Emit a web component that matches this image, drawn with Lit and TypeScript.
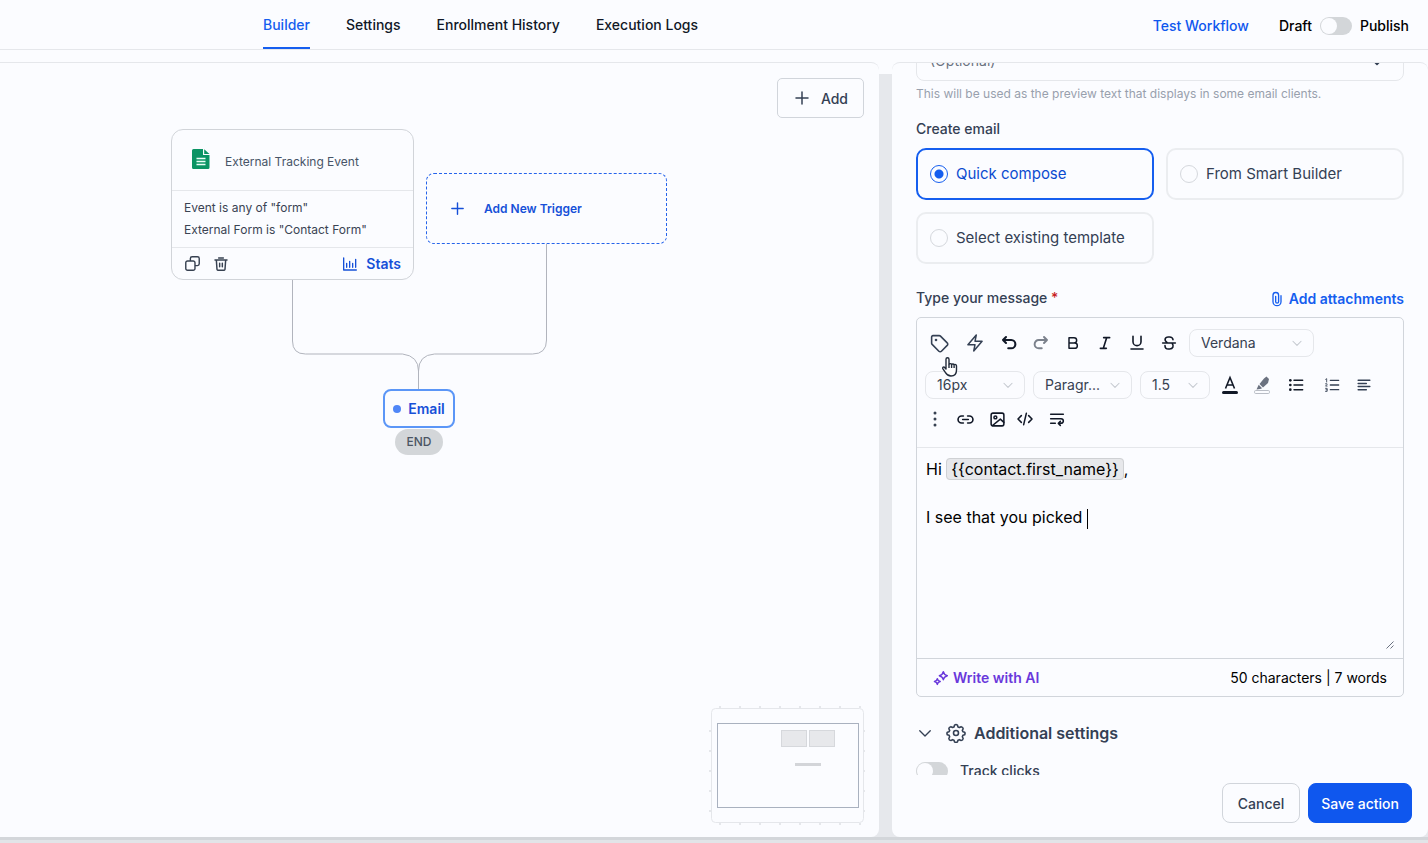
import { LitElement, html, css, svg, nothing } from "lit";
import { customElement } from "lit/decorators.js";

const icon = (name: string, body: unknown, size = 20, box = 24, width = 2) => html`
  <svg class="icon ${name}" width=${size} height=${size} viewBox="0 0 ${box} ${box}" fill="none"
    stroke="currentColor" stroke-width=${width} stroke-linecap="round" stroke-linejoin="round" aria-hidden="true">${body}</svg>`;

const chevron = (name: string, size: number, width = 2) =>
  icon(name, svg`<path d="m5 9 7 7 7-7"/>`, size, 24, width);

const icons = {
  plus: (s = 20) => icon("plus", svg`<path d="M12 4v16M4 12h16"/>`, s),
  sheet: () => html`<svg class="icon sheet" width="20" height="22" viewBox="0 0 20 22" aria-hidden="true">
    <path fill="#0b9464" d="M2.500 1H12v6h6.500v12.500a1.500 1.500 0 0 1-1.500 1.500H2.500A1.500 1.500 0 0 1 1 19.500v-17A1.500 1.500 0 0 1 2.500 1z"/>
    <path fill="#0b9464" d="M13.200 1.200 18.500 6h-5.300z"/>
    <path stroke="#e9fff6" stroke-width="1.400" d="M5.500 10.500h9M5.500 13.500h9M5.500 16.500h9"/></svg>`,
  copy: () => icon("copy", svg`<rect x="9" y="2.500" width="12.500" height="12.500" rx="2.500"/><path fill="#fbfcff" d="M5 8.500h8A2.500 2.500 0 0 1 15.500 11v8a2.500 2.500 0 0 1-2.500 2.500H5A2.500 2.500 0 0 1 2.500 19v-8A2.500 2.500 0 0 1 5 8.500z"/>`, 17),
  trash: () => icon("trash", svg`<path d="M3 6h18M8.500 3h7M5 6l1 14a2 2 0 0 0 2 1.500h8a2 2 0 0 0 2-1.500l1-14M10 11v5M14 11v5"/>`, 16, 24, 2.2),
  stats: () => icon("stats", svg`<path d="M2.500 3v18h19M7 17v-6M11.500 17V8M16 17v-6M20.500 17V5"/>`, 16),
  clip: () => icon("clip", svg`<path d="M18 7v9a6 6 0 0 1-12 0V6.500a4.200 4.200 0 0 1 8.400 0V16a2.200 2.200 0 0 1-4.400 0V8"/>`, 16),
  tag: () => icon("tag", svg`<path d="M3 4.500A1.500 1.500 0 0 1 4.500 3h7.200a2 2 0 0 1 1.400.600l7.700 7.700a2 2 0 0 1 0 2.900l-6.600 6.600a2 2 0 0 1-2.900 0L3.600 13a2 2 0 0 1-.6-1.400z"/><circle cx="8" cy="8" r=".6"/>`, 21, 24, 1.8),
  bolt: () => icon("bolt", svg`<path d="M13.500 2.500 3.500 14H12l-1.500 7.500L20.500 10H12z"/>`, 20, 24, 1.8),
  undo: () => icon("undo", svg`<path d="M4 8h11a5.500 5.500 0 0 1 0 11h-4M8 4 4 8l4 4"/>`, 18, 24, 2.8),
  redo: () => icon("redo", svg`<path d="M20 8H9a5.500 5.500 0 0 0 0 11h4M16 4l4 4-4 4"/>`, 18, 24, 2.6),
  bold: () => icon("bold", svg`<path d="M6 4h7.500a4 4 0 0 1 0 8H6zM6 12h8.500a4 4 0 0 1 0 8H6z"/>`, 16, 24, 2.2),
  italic: () => icon("italic", svg`<path d="M10 4h9M5 20h9M14.500 4l-5 16"/>`, 16, 24, 2.4),
  underline: () => icon("underline", svg`<path d="M6 2v8a6 6 0 0 0 12 0V2M3 21h18"/>`, 16, 24, 2.4),
  strike: () => icon("strike", svg`<path d="M18 7a5 4 0 0 0-5-4h-2C5.500 3 4.500 8.500 9 11M6 16c0 3 2 5 5 5h2c5 0 6.500-5 4-8M2.500 12h19"/>`, 16, 24, 2.4),
  textColor: () => html`<svg class="icon" width="18" height="20" viewBox="0 0 18 20" fill="none" stroke="#111827" stroke-width="1.600" aria-hidden="true">
    <path d="M4.500 13.500 9 2.500l4.500 11M6 10h6"/><path stroke-width="3" stroke-linecap="round" d="M2.500 17.500h13"/></svg>`,
  marker: () => html`<svg class="icon" width="18" height="20" viewBox="0 0 18 20" fill="none" aria-hidden="true">
    <path fill="#6b7280" d="M13.500 1.500 16 4l-1 4-5 4.500-3.500-3.500L11 3.500zM5.700 9.800l3.400 3.400-2 .800-3.600.500z"/>
    <rect x="1.500" y="15.500" width="15" height="3" rx="1.200" stroke="#b9bdc5"/></svg>`,
  bullets: () => icon("bullets", svg`<path d="M9 5h13M9 12h13M9 19h13"/><g fill="currentColor" stroke="none"><circle cx="3.500" cy="5" r="2"/><circle cx="3.500" cy="12" r="2"/><circle cx="3.500" cy="19" r="2"/></g>`, 16, 24, 2.2),
  numbers: () => icon("numbers", svg`<path d="M9.500 5H22M9.500 12H22M9.500 19H22"/><path stroke-width="1.300" d="M2.500 3.500 4 2.500v5M2.300 10.200h2.200v1.200l-2.200 2.200h2.400M2.300 17h2.400v4.600H2.300M3 19.200h1.700"/>`, 16, 24, 2),
  align: () => icon("align", svg`<path d="M2 4h20M2 9.300h14M2 14.600h20M2 20h14"/>`, 14, 24, 2.5),
  more: () => html`<svg class="icon" width="6" height="18" viewBox="0 0 6 18" fill="#374151" aria-hidden="true">
    <circle cx="3" cy="3" r="1.500"/><circle cx="3" cy="9" r="1.500"/><circle cx="3" cy="15" r="1.500"/></svg>`,
  link: () => icon("link", svg`<path d="M9 7H6.500a5 5 0 0 0 0 10H9M15 7h2.500a5 5 0 0 1 0 10H15M8 12h8"/>`, 17, 24, 2.3),
  image: () => icon("image", svg`<rect x="3" y="3" width="18" height="18" rx="2.500"/><circle cx="9" cy="9" r="2"/><path d="m5 20.500 11-9 5 4.500"/>`, 17, 24, 2.2),
  code: () => icon("code", svg`<path d="m6.500 7-5 5 5 5M17.500 7l5 5-5 5M14 3.500l-4 17"/>`, 16, 24, 2.3),
  wrap: () => icon("wrap", svg`<path d="M2.500 5h19M2.500 11.500H18a3.500 3.500 0 0 1 0 7h-3.500M2.500 18.500h7M17 15.500l-3 3 3 3"/>`, 16, 24, 2.3),
  sparkle: () => icon("sparkle", svg`<path d="M15.500 2.500c.6 3.600 2 5 6 6-4 1-5.400 2.400-6 6-.6-3.600-2-5-6-6 4-1 5.400-2.400 6-6zM6.500 13c.4 2.600 1.500 3.700 4.300 4.300-2.800.6-3.900 1.700-4.300 4.300-.4-2.600-1.500-3.700-4.300-4.300 2.800-.6 3.900-1.700 4.300-4.300z"/>`, 16, 24, 2.2),
  gear: () => icon("gear", svg`<circle cx="12" cy="12" r="3"/><path d="M10.300 2.500q1.700-1.400 3.400 0l.7 2.200 1.700.7 2.100-1q2.300.3 2.400 2.500l-1 2 .7 1.600 2.100.6q.9 1.500 0 3l-2.100.7-.7 1.700 1 2.100q-.3 2.200-2.500 2.400l-2-1-1.700.7-.7 2q-1.700 1.400-3.400 0l-.7-2-1.700-.7-2 1q-2.300-.2-2.500-2.400l1-2.100-.7-1.700-2.100-.7q-.9-1.500 0-3l2.100-.6.7-1.600-1-2q.1-2.200 2.400-2.500l2.100 1 1.700-.7z"/>`, 20, 24, 1.9),
};

const base = css`
  :host { font-family: Inter, "Liberation Sans", sans-serif; color: #111827; }
  *, *::before { box-sizing: border-box; }
  button { font: inherit; color: inherit; background: none; border: 0; padding: 0; margin: 0; cursor: pointer; }
  .icon { display: block; flex: none; }
  .switch { appearance: none; flex: none; width: 32px; height: 18px; margin: 0; border-radius: 9px; background: #d3d6d9; display: flex; align-items: center; padding: 1px; cursor: pointer; }
  .switch::before { content: ""; width: 16px; height: 16px; border-radius: 50%; background: #fbfcff; }
`;

@customElement("top-bar")
class TopBar extends LitElement {
  static styles = [base, css`
    :host { display: block; flex: none; }
    .bar { display: flex; align-items: stretch; justify-content: space-between; height: 50px; padding: 0 19px 0 263px; border-bottom: 1px solid #e5e7eb; font-size: 14px; font-weight: 500; line-height: 20px; }
    .tabs { display: flex; gap: 36px; }
    .tab { display: flex; align-items: center; color: #111827; text-decoration: none; border-bottom: 2px solid transparent; border-top: 2px solid transparent; }
    .tab.active { color: #155eef; border-bottom-color: #155eef; }
    .right { display: flex; align-items: center; gap: 30px; padding-top: 2px; }
    .test { color: #0f57ee; }
    .state { display: flex; align-items: center; gap: 8px; color: #000; }
  `];
  render() {
    return html`<header class="bar">
      <nav class="tabs">
        ${["Builder", "Settings", "Enrollment History", "Execution Logs"].map((t, i) =>
          html`<a class="tab ${i ? "" : "active"}" href="#" aria-current=${i ? nothing : "page"}>${t}</a>`)}
      </nav>
      <div class="right">
        <button class="test">Test Workflow</button>
        <div class="state"><span>Draft</span><input class="switch" type="checkbox" role="switch" aria-label="Publish workflow"><span>Publish</span></div>
      </div>
    </header>`;
  }
}

@customElement("workflow-canvas")
class WorkflowCanvas extends LitElement {
  static styles = [base, css`
    :host { display: block; position: relative; flex: 1; min-width: 0; overflow: hidden; background: #fbfcff; border-top: 1px solid #e5e7eb; border-radius: 0 8px 8px 0; }
    .add { position: absolute; top: 15px; right: 15px; display: flex; align-items: center; gap: 10px; height: 40px; padding: 0 15px; border: 1px solid #d1d5db; border-radius: 5px; font-size: 14px; font-weight: 500; color: #344054; }
    .wires { position: absolute; left: 0; top: 0; }
    .event { position: absolute; left: 171px; top: 66px; width: 243px; border: 1px solid #d1d4d9; border-radius: 12px; background: #fbfcff; font-size: 12px; line-height: 22px; color: #3a4353; }
    .title { display: flex; align-items: center; gap: 14px; height: 60px; padding: 3px 19px 0; color: #475467; }
    .sheet { margin-bottom: 6px; }
    .rules { padding: 6px 12px; border: solid #e5e7eb; border-width: 1px 0; }
    .rule { margin: 0; }
    .actions { display: flex; align-items: center; gap: 12px; height: 31px; padding: 0 12px; color: #374151; }
    .stats { display: flex; align-items: center; gap: 8px; margin-left: auto; font-size: 14px; font-weight: 600; color: #1650d8; }
    .trigger { position: absolute; left: 426px; top: 110px; width: 241px; height: 71px; display: flex; align-items: center; gap: 18px; padding: 0 22px; border: 1px dashed #2563eb; border-radius: 8px; background: #fbfcff; font-size: 12px; font-weight: 600; color: #1650d8; }
    .email { position: absolute; left: 383px; top: 326px; width: 72px; height: 39px; display: flex; align-items: center; justify-content: center; gap: 7px; border: 2px solid #5b96f7; border-radius: 8px; background: #fbfcff; font-size: 14px; font-weight: 600; color: #1650d8; }
    .dot { width: 8px; height: 8px; border-radius: 50%; background: #4f86f7; }
    .end { position: absolute; left: 395px; top: 366px; width: 48px; height: 26px; border-radius: 13px; background: #d3d6d9; text-align: center; font-size: 12px; font-weight: 500; line-height: 26px; color: #4b5563; }
    .map { position: absolute; right: 14px; bottom: 12px; }
  `];
  render() {
    return html`
      <svg class="wires" width="700" height="340" fill="none" stroke="#b1b4bd" aria-hidden="true">
        <path d="M292.500 217v61q0 13 13 13h97q16 2 16 17v18M546.500 181v96q0 14-14 14h-98q-16 1-16 17"/>
      </svg>
      <article class="event">
        <div class="title">${icons.sheet()}<span>External Tracking Event</span></div>
        <div class="rules"><p class="rule">Event is any of "form"</p><p class="rule">External Form is "Contact Form"</p></div>
        <div class="actions">
          <button aria-label="Duplicate">${icons.copy()}</button>
          <button aria-label="Delete">${icons.trash()}</button>
          <button class="stats">${icons.stats()}Stats</button>
        </div>
      </article>
      <button class="trigger">${icons.plus(17)}Add New Trigger</button>
      <button class="email"><span class="dot"></span>Email</button>
      <div class="end">END</div>
      <button class="add">${icons.plus(18)}Add</button>
      <svg class="map" width="156" height="120" viewBox="0 0 156 120" fill="none" stroke="#e5e7eb" aria-label="Minimap">
        <rect x="2.500" y="3.500" width="152" height="114" rx="4"/>
        <path stroke-width="2" stroke-dasharray="2 18" d="M10 2h142M10 119h142M1 25v90M155 25v90"/>
        <rect x="8.500" y="18.500" width="141" height="84" stroke="#a9b1bf"/>
        <rect x="72.500" y="25.500" width="25" height="16" fill="#e7e8eb" stroke="#d6d8dc"/>
        <rect x="100.500" y="25.500" width="25" height="16" fill="#e7e8eb" stroke="#d6d8dc"/>
        <path stroke="#d3d5d9" stroke-width="3" d="M86 59.500h26"/>
      </svg>`;
  }
}

@customElement("message-editor")
class MessageEditor extends LitElement {
  static styles = [base, css`
    :host { display: block; }
    .box { border: 1px solid #d1d5db; border-radius: 5px; }
    .tools { padding: 11px 8px 14px; border-bottom: 1px solid #e5e7eb; color: #1f2937; }
    .row { display: flex; align-items: center; height: 28px; }
    .row + .row { margin-top: 14px; }
    .row + .row.last { margin-top: 6px; }
    .tool { display: flex; align-items: center; justify-content: center; width: 32px; height: 28px; flex: none; color: #111827; }
    .tool.wide { width: 36px; }
    .tool.slim { width: 28px; color: #344054; }
    .tool.dark { width: 28px; }
    .tool.lead { padding-right: 4px; color: #344054; }
    .tool.soft { width: 36px; color: #344054; }
    .tool.half { width: 22px; padding-right: 2px; }
    .tool.dim { color: #7b818c; }
    .pick { position: relative; display: flex; align-items: center; flex: none; height: 28px; margin-right: 8px; }
    .pick select { appearance: none; width: 100%; height: 28px; margin: 0; padding: 0 24px 0 11px; border: 1px solid #e5e7eb; border-radius: 8px; background: none; font: 400 14px/20px Inter, "Liberation Sans", sans-serif; color: #374151; }
    .pick .icon { position: absolute; right: 10px; color: #c4c8cf; pointer-events: none; }
    .font { width: 125px; margin: 0 0 0 4px; }
    .size { width: 100px; }
    .para { width: 99px; }
    .line { width: 70px; margin-right: 4px; }
    .body { position: relative; height: 211px; padding: 9px; font-size: 16px; line-height: 24px; color: #000; border-bottom: 1px solid #d1d5db; }
    .text { outline: none; height: 100%; }
    .text p { margin: 0; min-height: 24px; }
    .token { padding: 0 4px; border: 1px solid #cfd1d4; border-radius: 4px; background: #e7e8eb; }
    .caret { display: inline-block; width: 1px; height: 20px; background: #000; vertical-align: middle; }
    .grip { position: absolute; right: 8px; bottom: 8px; color: #6b7280; }
    .foot { display: flex; justify-content: space-between; align-items: center; height: 37px; padding: 0 16px; font-size: 14px; line-height: 20px; color: #000; }
    .ai { display: flex; align-items: center; gap: 4px; font-weight: 600; color: #6938db; }
    .cursor { position: absolute; left: 25px; top: 39px; }
    .wrapper { position: relative; }
  `];
  private tool(name: string, glyph: unknown, kind = "") {
    return html`<button class="tool ${kind}" aria-label=${name}>${glyph}</button>`;
  }
  private pick(kind: string, name: string, value: string) {
    return html`<label class="pick ${kind}"><select aria-label=${name}><option>${value}</option></select>${chevron("", 14, 1.8)}</label>`;
  }
  render() {
    return html`<div class="wrapper"><div class="box">
      <div class="tools">
        <div class="row">
          ${this.tool("Custom values", icons.tag(), "lead")}
          ${this.tool("Trigger links", icons.bolt(), "soft")}
          ${this.tool("Undo", icons.undo())}${this.tool("Redo", icons.redo(), "dim")}
          ${this.tool("Bold", icons.bold())}${this.tool("Italic", icons.italic())}
          ${this.tool("Underline", icons.underline())}${this.tool("Strikethrough", icons.strike())}
          ${this.pick("font", "Font family", "Verdana")}
        </div>
        <div class="row">
          ${this.pick("size", "Font size", "16px")}${this.pick("para", "Block type", "Paragr...")}${this.pick("line", "Line height", "1.5")}
          ${this.tool("Text colour", icons.textColor())}${this.tool("Highlight", icons.marker())}
          ${this.tool("Bulleted list", icons.bullets(), "wide")}${this.tool("Numbered list", icons.numbers(), "soft")}
          ${this.tool("Align", icons.align(), "slim")}
        </div>
        <div class="row last">
          ${this.tool("More", icons.more(), "half")}${this.tool("Insert link", icons.link(), "wide")}
          ${this.tool("Insert image", icons.image(), "dark")}${this.tool("Source code", icons.code(), "dark")}${this.tool("Wrap text", icons.wrap(), "wide")}
        </div>
      </div>
      <div class="body">
        <div class="text" contenteditable="true" role="textbox" aria-multiline="true" aria-label="Type your message">
          <p>Hi <span class="token">{{contact.first_name}}</span>,</p><p></p><p>I see that you picked <span class="caret"></span></p>
        </div>
        <svg class="icon grip" width="10" height="10" viewBox="0 0 10 10" stroke="currentColor" aria-hidden="true"><path d="M1.500 8.500l7-7M5.500 8.500l3-3"/></svg>
      </div>
      <div class="foot"><button class="ai">${icons.sparkle()}Write with AI</button><span>50 characters | 7 words</span></div>
    </div>
    <svg class="cursor" width="18" height="22" viewBox="0 0 18 22" fill="#fff" stroke="#222b3a" stroke-width="1.400" stroke-linejoin="round" aria-hidden="true">
      <path d="M5 13V3.200a1.500 1.500 0 0 1 3 0V8.500a1.400 1.400 0 0 1 2.600 0 1.400 1.400 0 0 1 2.500.600 1.300 1.300 0 0 1 2.400.800V14c0 4-2 6-5.500 6-3 0-4.300-1.200-5.500-3.300L1.800 12.600c-.6-1.500 1.200-2 2-.9z"/><path d="M8 8.500V12M10.600 9v3M13.100 9.500V12"/></svg>
    </div>`;
  }
}

@customElement("action-panel")
class ActionPanel extends LitElement {
  static styles = [base, css`
    :host { display: flex; flex-direction: column; flex: 0 0 536px; min-width: 0; background: #fbfcff; border-top: 1px solid #e5e7eb; border-radius: 8px; overflow: hidden; }
    .scroll { flex: 1; min-height: 0; overflow-y: auto; scrollbar-width: none; padding: 0 24px 24px; }
    .preview { display: flex; align-items: center; justify-content: space-between; height: 40px; padding: 0 16px 0 13px; border: 1px solid #e5e7eb; border-radius: 8px; color: #344054; }
    .preview input { flex: 1; min-width: 0; border: 0; padding: 0; background: none; outline: none; font: 400 14px/20px Inter, "Liberation Sans", sans-serif; }
    .preview input::placeholder { color: #6b7280; opacity: 1; }
    .hint { margin: 4px 0 16px; font-size: 12px; line-height: 18px; color: #98a0ad; }
    .modes { border: 0; margin: 0; padding: 0; min-width: 0; }
    .label { padding: 0; font-size: 14px; font-weight: 500; line-height: 20px; color: #344054; }
    .grid { display: grid; grid-template-columns: 1fr 1fr; gap: 12px; padding-top: 9px; }
    .card { display: flex; align-items: center; gap: 8px; height: 52px; padding: 0 12px; border: 2px solid #ebedf0; border-radius: 10px; font-size: 15px; line-height: 24px; color: #344054; }
    .card.on { border-color: #155eef; color: #0b4bd0; }
    .card input { appearance: none; flex: none; margin: 0; width: 18px; height: 18px; border: 1px solid #d5d8dd; border-radius: 50%; background: #fbfcff; }
    .card.on input { border-color: #155eef; background: radial-gradient(#155eef 4px, transparent 5px); }
    .head { display: flex; align-items: flex-start; justify-content: space-between; margin: 24px 0 8px; }
    .req { color: #c81e1e; }
    .attach { display: flex; align-items: center; gap: 4px; padding-top: 1px; font-size: 14px; font-weight: 600; line-height: 20px; color: #155eef; }
    .more { display: flex; align-items: center; margin: 24px 0 16px; font-size: 16px; font-weight: 600; line-height: 24px; color: #344054; }
    .more .gear { margin: 0 8px 0 12px; }
    .track { display: flex; align-items: center; gap: 12px; font-size: 14px; line-height: 20px; font-weight: 500; color: #344054; }
    .foot { flex: none; display: flex; justify-content: flex-end; gap: 8px; padding: 8px 16px 14px; }
    .btn { height: 40px; padding: 0 15px; border: 1px solid #d1d5db; border-radius: 8px; font-size: 14px; font-weight: 500; color: #344054; }
    .btn.main { padding: 0 12px; background: #0f57ee; border-color: #0f57ee; color: #fff; }
  `];
  async firstUpdated() {
    await (this.renderRoot.querySelector("message-editor") as LitElement).updateComplete;
    this.renderRoot.querySelector(".scroll")!.scrollTop = 22;
  }
  private card(label: string, on = false) {
    return html`<label class="card ${on ? "on" : ""}"><input type="radio" name="mode" .checked=${on}>${label}</label>`;
  }
  render() {
    return html`
      <div class="scroll">
        <div class="preview"><input aria-label="Preview text" placeholder="(Optional)">${chevron("", 20)}</div>
        <p class="hint">This will be used as the preview text that displays in some email clients.</p>
        <fieldset class="modes">
          <legend class="label">Create email</legend>
          <div class="grid">${this.card("Quick compose", true)}${this.card("From Smart Builder")}${this.card("Select existing template")}</div>
        </fieldset>
        <div class="head"><span class="label">Type your message <span class="req">*</span></span><button class="attach">${icons.clip()}Add attachments</button></div>
        <message-editor></message-editor>
        <button class="more" aria-expanded="true">${chevron("", 18, 1.8)}${icons.gear()}Additional settings</button>
        <label class="track"><input class="switch" type="checkbox" role="switch">Track clicks</label>
      </div>
      <footer class="foot"><button class="btn">Cancel</button><button class="btn main">Save action</button></footer>`;
  }
}

@customElement("app-root")
class AppRoot extends LitElement {
  static styles = [base, css`
    :host { display: flex; flex-direction: column; height: 100vh; overflow: hidden; background: #fbfcff; }
    .main { flex: 1; min-height: 0; display: flex; gap: 13px; margin-top: 12px; padding-bottom: 6px; background: linear-gradient(#fbfcff 12px, transparent 12px), linear-gradient(to top, #e2e4e8 3px, #d3d6da 3px, #d3d6da 6px, #e6e8ec 6px); }
  `];
  render() {
    return html`<top-bar></top-bar><main class="main"><workflow-canvas></workflow-canvas><action-panel></action-panel></main>`;
  }
}
